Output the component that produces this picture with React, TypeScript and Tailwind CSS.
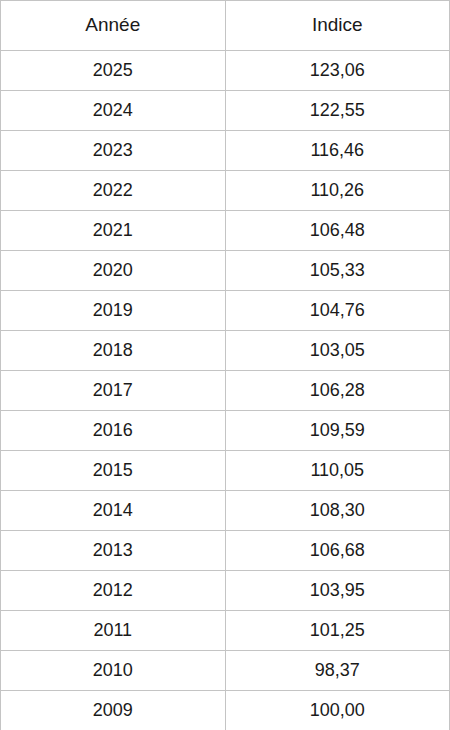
const ROWS: [string, string][] = [
  ['2025', '123,06'],
  ['2024', '122,55'],
  ['2023', '116,46'],
  ['2022', '110,26'],
  ['2021', '106,48'],
  ['2020', '105,33'],
  ['2019', '104,76'],
  ['2018', '103,05'],
  ['2017', '106,28'],
  ['2016', '109,59'],
  ['2015', '110,05'],
  ['2014', '108,30'],
  ['2013', '106,68'],
  ['2012', '103,95'],
  ['2011', '101,25'],
  ['2010', '98,37'],
  ['2009', '100,00'],
];

export default function App() {
  return (
    <div className="w-[450px] bg-white font-['Liberation_Sans',Arial,sans-serif] text-[#1a1a1a]">
      <table className="w-full table-fixed border-collapse">
        <thead>
          <tr>
            <th className="h-[50px] border border-[#c4c4c4] text-[19px] font-normal">Année</th>
            <th className="h-[50px] border border-[#c4c4c4] text-[19px] font-normal">Indice</th>
          </tr>
        </thead>
        <tbody>
          {ROWS.map(([year, value]) => (
            <tr key={year}>
              <td className="h-[40px] border border-[#c4c4c4] text-center text-[18px]">{year}</td>
              <td className="h-[40px] border border-[#c4c4c4] text-center text-[18px]">{value}</td>
            </tr>
          ))}
        </tbody>
      </table>
    </div>
  );
}
